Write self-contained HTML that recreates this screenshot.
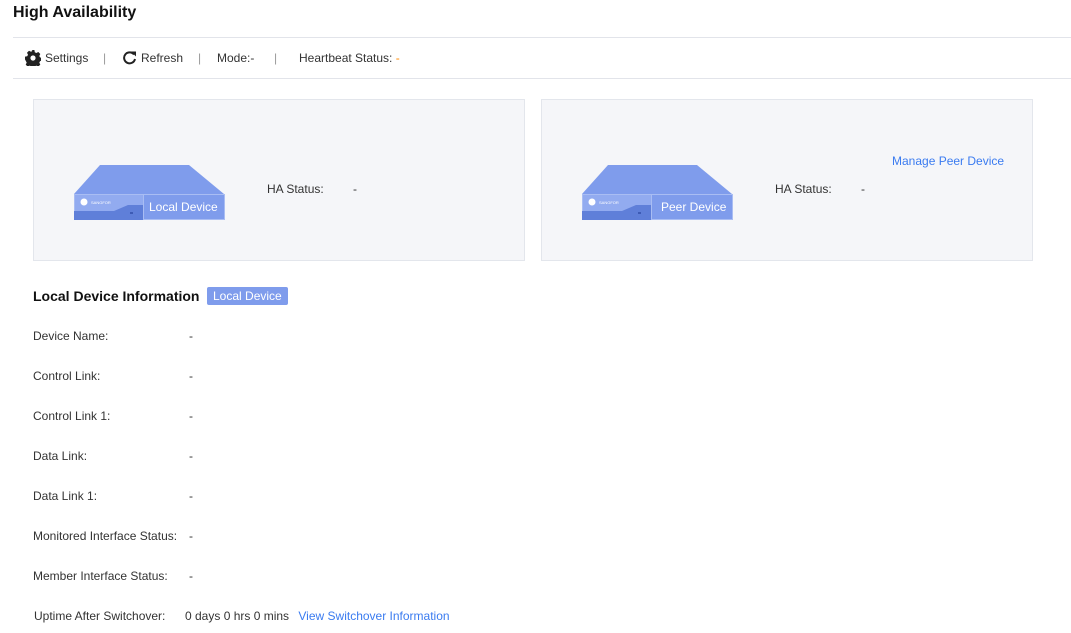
<!DOCTYPE html><html><head><style>
body{margin:0;background:#fff;font-family:"Liberation Sans",sans-serif;font-size:12px;color:#333;width:1071px;height:633px;overflow:hidden;position:relative}
.a{position:absolute;white-space:nowrap}
.card{position:absolute;top:99px;width:490px;height:160px;background:#f5f6f9;border:1px solid #e3e6ec}
.lbl{position:absolute;left:33px}
.val{position:absolute;left:189px}
</style></head><body>
<div class="a" style="left:13px;top:4px;font-size:16px;font-weight:bold;color:#111">High Availability</div>
<div class="a" style="left:13px;top:37px;width:1058px;height:1px;background:#e2e4ea"></div>
<div class="a" style="left:13px;top:78px;width:1058px;height:1px;background:#e2e4ea"></div>
<svg class="a" style="left:25px;top:50px" width="16" height="16" viewBox="0 0 16 16"><path fill="#222" d="M6.6 0h2.8l.4 2.2 1.5.8 2-1 2 2-1 2 .8 1.5 2.2.4v2.8l-2.2.4-.8 1.5 1 2-2 2-2-1-1.5.8-.4 2.2H6.6l-.4-2.2-1.5-.8-2 1-2-2 1-2-.8-1.5L0 9.4V6.6l2.2-.4.8-1.5-1-2 2-2 2 1 1.5-.8z"/><circle cx="8" cy="8" r="2.6" fill="#fff"/></svg>
<div class="a" style="left:45px;top:51px">Settings</div>
<div class="a" style="left:103px;top:51px;color:#999">|</div>
<svg class="a" style="left:122px;top:50px" width="15" height="15" viewBox="0 0 15 15"><path d="M12 4.5A5.5 5.5 0 1 0 13 9" fill="none" stroke="#222" stroke-width="2"/><path d="M9 1.5h5v5z" fill="#222"/></svg>
<div class="a" style="left:141px;top:51px">Refresh</div>
<div class="a" style="left:198px;top:51px;color:#999">|</div>
<div class="a" style="left:217px;top:51px">Mode:-</div>
<div class="a" style="left:274px;top:51px;color:#999">|</div>
<div class="a" style="left:299px;top:51px">Heartbeat Status: <span style="color:#f80">-</span></div>

<div class="card" style="left:33px"></div>
<div class="card" style="left:541px"></div>

<svg class="a" style="left:74px;top:165px" width="151" height="55" viewBox="0 0 151 55"><path d="M26 0h89l35 29H0z" fill="#7f9cec"/><rect x="0" y="29" width="151" height="26" fill="#7f9cec"/><rect x="0.5" y="29.5" width="69" height="25" fill="#92abf0" stroke="#a9bdf3"/><path d="M0 46h40l14-6h16v15H0z" fill="#5f7fd9"/><rect x="69.5" y="29.5" width="81" height="25" fill="none" stroke="#a9bdf3"/><circle cx="10" cy="37" r="3.5" fill="#fff"/><text x="17" y="39" font-size="4" fill="#fff" font-family="Liberation Sans">SANGFOR</text><rect x="56" y="47" width="3" height="2" fill="#3d5bb5"/><text x="75" y="46" font-size="12" fill="#fff" font-family="Liberation Sans">Local Device</text></svg>
<svg class="a" style="left:582px;top:165px" width="151" height="55" viewBox="0 0 151 55"><path d="M26 0h89l35 29H0z" fill="#7f9cec"/><rect x="0" y="29" width="151" height="26" fill="#7f9cec"/><rect x="0.5" y="29.5" width="69" height="25" fill="#92abf0" stroke="#a9bdf3"/><path d="M0 46h40l14-6h16v15H0z" fill="#5f7fd9"/><rect x="69.5" y="29.5" width="81" height="25" fill="none" stroke="#a9bdf3"/><circle cx="10" cy="37" r="3.5" fill="#fff"/><text x="17" y="39" font-size="4" fill="#fff" font-family="Liberation Sans">SANGFOR</text><rect x="56" y="47" width="3" height="2" fill="#3d5bb5"/><text x="79" y="46" font-size="12" fill="#fff" font-family="Liberation Sans">Peer Device</text></svg>
<div class="a" style="left:267px;top:182px">HA Status:</div><div class="a" style="left:353px;top:182px">-</div>
<div class="a" style="left:775px;top:182px">HA Status:</div><div class="a" style="left:861px;top:182px">-</div>
<div class="a" style="left:892px;top:154px;color:#3a7bf0">Manage Peer Device</div>

<div class="a" style="left:33px;top:288px;font-size:14px;font-weight:bold;color:#111">Local Device Information</div>
<div class="a" style="left:207px;top:287px;height:18px;line-height:18px;padding:0 6px;background:#7f9cec;color:#fff;border-radius:2px">Local Device</div>

<div class="a lbl" style="top:329px">Device Name:</div><div class="a val" style="top:329px">-</div>
<div class="a lbl" style="top:369px">Control Link:</div><div class="a val" style="top:369px">-</div>
<div class="a lbl" style="top:409px">Control Link 1:</div><div class="a val" style="top:409px">-</div>
<div class="a lbl" style="top:449px">Data Link:</div><div class="a val" style="top:449px">-</div>
<div class="a lbl" style="top:489px">Data Link 1:</div><div class="a val" style="top:489px">-</div>
<div class="a lbl" style="top:529px">Monitored Interface Status:</div><div class="a val" style="top:529px">-</div>
<div class="a lbl" style="top:569px">Member Interface Status:</div><div class="a val" style="top:569px">-</div>
<div class="a lbl" style="top:609px;left:34px">Uptime After Switchover:</div>
<div class="a" style="left:185px;top:609px">0 days 0 hrs 0 mins <span style="color:#3a7bf0;margin-left:6px">View Switchover Information</span></div>
</body></html>
